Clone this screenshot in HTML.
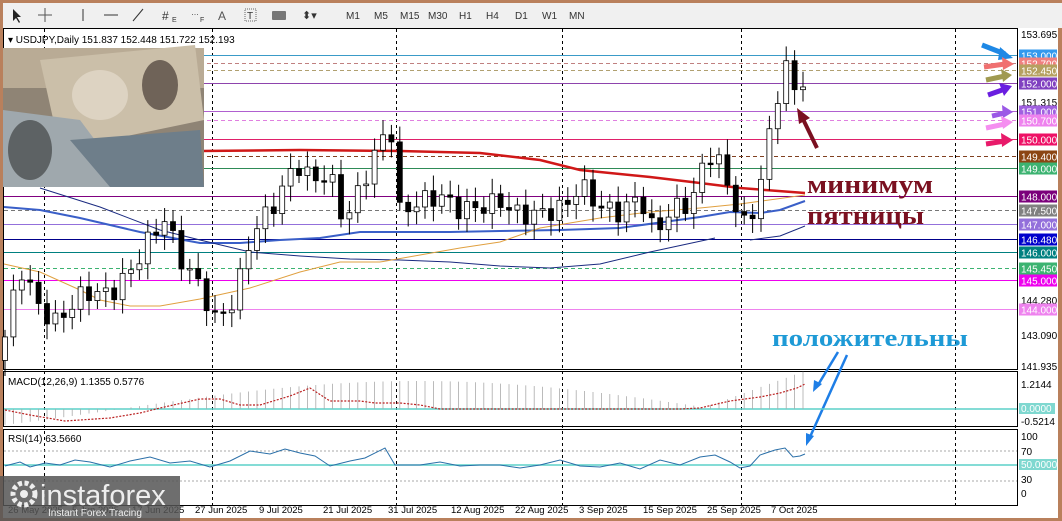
<!DOCTYPE html>
<html><head><meta charset="utf-8"><style>
html,body{margin:0;padding:0;width:1062px;height:521px;overflow:hidden;background:#b9805c}
svg{display:block}
text{font-family:"Liberation Sans",sans-serif}
text.ser{font-family:"Liberation Serif",serif;font-weight:bold}
</style></head><body>
<svg id="s" width="1062" height="521" xmlns="http://www.w3.org/2000/svg">
<rect x="0" y="0" width="1062" height="521" fill="#b9805c"/>
<rect x="3" y="3" width="1059" height="25" fill="#f0f0f0"/>
<g font-size="10" fill="#333">
<path d="M13 9 L13 21 L16 18 L19 23 L20 22 L17 17 L21 17 Z" fill="#222"/>
<path d="M45 8v14M38 15h14" stroke="#555"/>
<line x1="83" y1="9" x2="83" y2="21" stroke="#333"/>
<line x1="104" y1="15" x2="118" y2="15" stroke="#333"/>
<line x1="133" y1="21" x2="143" y2="9" stroke="#333"/>
<text x="162" y="20" font-size="12">#</text><text x="172" y="22" font-size="7">E</text>
<text x="191" y="15" font-size="8">…</text><text x="200" y="22" font-size="7">F</text>
<text x="218" y="20" font-size="12" fill="#555">A</text>
<rect x="245" y="9" width="11" height="12" fill="none" stroke="#666" stroke-dasharray="1,1"/><text x="247" y="19" font-size="10">T</text>
<rect x="272" y="11" width="14" height="9" fill="#777" rx="1"/>
<text x="302" y="19" font-size="11">⬍▾</text>
<text x="346" y="19">M1</text><text x="374" y="19">M5</text><text x="400" y="19">M15</text><text x="428" y="19">M30</text><text x="459" y="19">H1</text><text x="486" y="19">H4</text><text x="515" y="19">D1</text><text x="542" y="19">W1</text><text x="569" y="19">MN</text>
</g>
<rect x="3" y="28" width="1055" height="490" fill="#fff"/>
<rect x="3.5" y="28.5" width="1014" height="341" fill="none" stroke="#000"/>
<rect x="3.5" y="371.5" width="1014" height="55" fill="none" stroke="#000"/>
<rect x="3.5" y="429.5" width="1014" height="76" fill="none" stroke="#000"/>
<g id="grid" stroke="#000" stroke-dasharray="3,3"></g>
<g id="levels"></g>
<g id="ma"></g>
<g id="candles"></g>
<g>
<rect x="3" y="48" width="201" height="139" fill="#8f8475"/>
<rect x="3" y="48" width="201" height="40" fill="#b9ab95"/>
<polygon points="40,60 195,45 204,120 60,150" fill="#cbbfa9"/>
<ellipse cx="100" cy="95" rx="28" ry="25" fill="#ddd3c2"/>
<ellipse cx="160" cy="85" rx="18" ry="25" fill="#6f6358"/>
<polygon points="3,110 80,120 130,187 3,187" fill="#9fa8ad"/>
<ellipse cx="30" cy="150" rx="22" ry="30" fill="#5d6264"/>
<polygon points="70,140 200,130 204,187 110,187" fill="#6e7e8a"/>
</g>
<text x="8" y="43" font-size="10" fill="#000">▾ USDJPY,Daily  151.837 152.448 151.722 152.193</text>
<text class="ser" x="807" y="193" font-size="26" fill="#7a1020" textLength="126" lengthAdjust="spacingAndGlyphs">минимум</text>
<text class="ser" x="807" y="224" font-size="26" fill="#7a1020" textLength="117" lengthAdjust="spacingAndGlyphs">пятницы</text>
<path d="M817 148 L801 115" stroke="#7a1020" stroke-width="4"/>
<polygon points="797,108 810,118 799,124" fill="#7a1020"/>
<text class="ser" x="772" y="346" font-size="24" fill="#1e9ad6" textLength="196" lengthAdjust="spacingAndGlyphs">положительны</text>
<path d="M838 352 L818 385" stroke="#1e7ee6" stroke-width="2.5"/><polygon points="813,392 814,380 822,384" fill="#1e7ee6"/>
<path d="M847 355 L810 437" stroke="#1e7ee6" stroke-width="2.5"/><polygon points="806,446 806,433 814,436" fill="#1e7ee6"/>
<g stroke-width="5">
<path d="M982 45 L1005 54" stroke="#1e88e5"/><polygon points="1013,58 1000,47 998,60" fill="#1e88e5"/>
<path d="M984 67 L1005 64" stroke="#f07070"/><polygon points="1014,64 1002,57 1003,70" fill="#f07070"/>
<path d="M986 80 L1005 76" stroke="#a09a50"/><polygon points="1012,75 1001,69 1003,82" fill="#a09a50"/>
<path d="M988 95 L1005 89" stroke="#6a1ee0"/><polygon points="1012,86 999,83 1004,96" fill="#6a1ee0"/>
<path d="M992 116 L1005 113" stroke="#9b59e6"/><polygon points="1013,112 1002,105 1003,118" fill="#9b59e6"/>
<path d="M986 128 L1005 124" stroke="#f58ef0"/><polygon points="1013,122 1001,116 1003,129" fill="#f58ef0"/>
<path d="M986 144 L1005 141" stroke="#e81a6a"/><polygon points="1013,140 1001,133 1002,147" fill="#e81a6a"/>
</g>
<g font-size="10" fill="#000">
<text x="1021" y="38">153.695</text><text x="1021" y="106">151.315</text><text x="1021" y="304">144.280</text><text x="1021" y="339">143.090</text><text x="1021" y="370">141.935</text>
</g>
<g id="axis" font-size="10" fill="#000"></g>
<g font-size="10" fill="#000">
<text x="1021" y="388">1.2144</text><text x="1021" y="425">-0.5214</text>
<text x="1021" y="440">100</text><text x="1021" y="455">70</text><text x="1021" y="483">30</text><text x="1021" y="497">0</text>
</g>
<rect x="1019" y="403" width="36" height="11" fill="#7fd8d0"/><text x="1021" y="412" font-size="10" fill="#fff">0.0000</text>
<rect x="1019" y="459" width="38" height="11" fill="#7fd8d0"/><text x="1021" y="468" font-size="10" fill="#fff">50.0000</text>
<text x="8" y="385" font-size="10">MACD(12,26,9) 1.1355 0.5776</text>
<text x="8" y="442" font-size="10">RSI(14) 63.5660</text>
<line x1="4" y1="409" x2="1017" y2="409" stroke="#5cd0c8" stroke-width="1.5"/>
<line x1="4" y1="465" x2="1017" y2="465" stroke="#5cd0c8" stroke-width="1.5"/>
<line x1="4" y1="451" x2="1017" y2="451" stroke="#aaa" stroke-dasharray="2,2"/>
<line x1="4" y1="481" x2="1017" y2="481" stroke="#aaa" stroke-dasharray="2,2"/>
<g id="macd"></g>
<polyline fill="none" stroke="#b22" stroke-width="1.2" stroke-dasharray="2,1.5" points="5,410 30,415 65,421 110,418 140,413 160,408 200,399 220,399 240,405 260,405 290,396 310,388 330,401 360,401 375,403 400,403 420,405 440,409 460,409 480,409 500,409 520,409 540,409 560,409 590,409 610,409 640,409 660,409 680,409 700,408 730,401 760,397 780,393 797,388 805,384"/>
<polyline fill="none" stroke="#2a6fa8" stroke-width="1" points="5,466 20,462 30,467 45,463 60,465 75,460 90,462 110,467 130,461 150,457 170,463 190,461 210,467 230,461 250,451 270,454 285,449 300,453 315,456 330,466 350,461 365,458 385,448 395,465 420,465 440,462 460,466 480,465 500,465 520,468 540,465 560,460 580,466 600,467 620,463 640,469 660,460 680,465 700,457 715,455 730,462 740,468 750,466 760,455 775,450 785,448 793,457 800,456 805,454"/>
<g font-size="9.5" fill="#000">
<text x="8" y="513">26 May 2025</text><text x="72" y="513">5 Jun 2025</text><text x="132" y="513">17 Jun 2025</text>
<text x="195" y="513">27 Jun 2025</text><text x="259" y="513">9 Jul 2025</text><text x="323" y="513">21 Jul 2025</text><text x="388" y="513">31 Jul 2025</text><text x="451" y="513">12 Aug 2025</text><text x="515" y="513">22 Aug 2025</text><text x="579" y="513">3 Sep 2025</text><text x="643" y="513">15 Sep 2025</text><text x="707" y="513">25 Sep 2025</text><text x="771" y="513">7 Oct 2025</text>
</g>
<rect x="0" y="476" width="180" height="45" fill="#555" opacity="0.85"/>
<circle cx="24" cy="494" r="11" fill="none" stroke="#eee" stroke-width="5" stroke-dasharray="4,2.5"/>
<circle cx="24" cy="494" r="4" fill="#eee"/>
<text x="40" y="505" font-size="29" fill="#eee">instaforex</text>
<text x="48" y="516" font-size="10" fill="#eee">Instant Forex Tracing</text>
</svg>
<script>
var NS="http://www.w3.org/2000/svg",s=document.getElementById('s');
function el(g,t,a){var e=document.createElementNS(NS,t);for(var k in a)e.setAttribute(k,a[k]);document.getElementById(g).appendChild(e);return e}
function Y(p){return 35+(153.695-p)*28.23}
[44,212,396,562,741,955].forEach(function(x){el('grid','line',{x1:x+.5,y1:29,x2:x+.5,y2:505})});
var L=[[153,'#3a9bc8',0,'#3399ee'],[152.7,'#c08080',1,'#f08080'],[152.45,'#b0a070',1,'#b5a060'],[152,'#8e44ad',0,'#8040c0'],[151,'#b060d0',0,'#a060e0'],[150.7,'#e080e0',1,'#ee82ee'],[150,'#e0206a',0,'#ee1166'],[149.4,'#804020',1,'#8b4513'],[149,'#2e8b57',0,'#3cb371'],[148,'#800080',0,'#7b007b'],[147.5,'#777',1,'#808080'],[147,'#9370db',0,'#9370db'],[146.48,'#00008b',0,'#0000cc'],[146,'#008080',0,'#008080'],[145.45,'#3cb371',1,'#3cb371'],[145,'#ee00ee',0,'#ee00ee'],[144,'#ee82ee',0,'#ee82ee']];
L.forEach(function(l){var y=Math.round(Y(l[0]))+.5;el('levels','line',{x1:4,y1:y,x2:1017,y2:y,stroke:l[1],'stroke-dasharray':l[2]?'4,3':'none'});
el('axis','rect',{x:1019,y:y-6,width:38,height:12,fill:l[3]});var t=el('axis','text',{x:1021,y:y+4,fill:'#fff'});t.textContent=l[0].toFixed(3);});
function pl(pts,c,w){el('ma','polyline',{points:pts,fill:'none',stroke:c,'stroke-width':w})}
pl("4,153 100,152 200,151 300,150 400,151 480,153 540,160 580,170 650,177 700,183 740,188 805,193",'#d01818',2.5);
pl("4,207 40,210 80,218 140,232 200,243 240,243 280,240 320,238 360,232 400,232 450,232 500,231 560,230 620,228 700,217 730,212 760,213 780,210 805,201",'#3a5fc8',2);
pl("40,188 100,207 160,230 200,240 250,252 300,256 350,259 400,260 450,262 500,266 550,268 600,264 650,252 715,238",'#1a2a80',1);
pl("750,240 780,236 805,226",'#1a2a80',1);
pl("4,264 40,272 80,290 100,300 130,306 160,306 200,299 250,288 300,272 340,262 380,262 420,255 460,248 500,242 540,228 600,218 650,212 700,208 740,204 805,195",'#e0a040',1);
var K=[[5,143],[20,145.5],[40,144],[55,143.5],[85,144.6],[110,144.5],[130,145.3],[150,146.5],[165,147.2],[180,145.8],[200,144.8],[215,143.6],[235,144.3],[250,146.5],[265,147.3],[280,148],[295,149.2],[310,148.6],[330,148.7],[345,147],[360,148.3],[380,149.8],[390,150.8],[398,147.4],[420,147.8],[440,148],[460,147.5],[480,147.6],[500,147.8],[520,147.3],[545,147.4],[565,147.6],[580,148.4],[600,147.6],[620,147.4],[640,148],[655,146.6],[670,147.5],[690,147.7],[705,149.2],[715,149.7],[725,148.5],[735,147.8],[745,146.9],[755,147.5],[765,149.5],[773,150.5],[781,152.3],[789,152.9],[797,151],[803,152.2]];
function cl(x){for(var i=1;i<K.length;i++)if(x<=K[i][0]){var a=K[i-1],b=K[i];return a[1]+(b[1]-a[1])*(x-a[0])/(b[0]-a[0])}return K[K.length-1][1]}
var prev=cl(0);
for(var i=0;i<96;i++){var x=5+i*8.4,c=cl(x)+0.35*Math.sin(i*2.3),o=prev;prev=c;
var hi=Math.max(o,c)+0.25+0.3*Math.abs(Math.sin(i*1.7)),lo=Math.min(o,c)-0.25-0.3*Math.abs(Math.cos(i*1.3));
el('candles','line',{x1:x,y1:Y(hi),x2:x,y2:Y(lo),stroke:'#000'});
var y1=Y(Math.max(o,c)),h=Math.max(1.5,Y(Math.min(o,c))-y1);
el('candles','rect',{x:x-2.5,y:y1,width:5,height:h,fill:c>=o?'#fff':'#000',stroke:'#000','stroke-width':0.8});
var m=409-28*Math.sin((x-120)/190)*(x<700?1:0)-(x>=700?(x-700)/105*38:0);
el('macd','line',{x1:x,y1:409,x2:x,y2:m,stroke:'#aaa','stroke-width':0.8});}
</script>
</body></html>
